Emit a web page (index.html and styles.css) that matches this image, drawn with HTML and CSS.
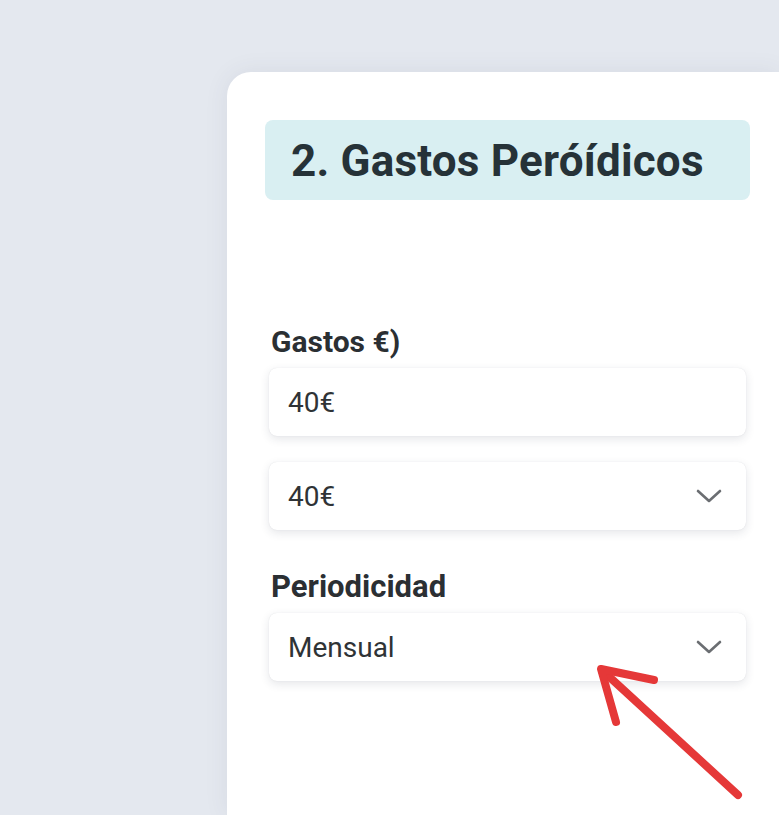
FILE: index.html
```html
<!DOCTYPE html>
<html lang="es">
<head>
<meta charset="utf-8">
<link rel="stylesheet" href="styles.css">
</head>
<body>
<div class="card">
  <div class="header"><h1 class="title">2. Gastos Peróídicos</h1></div>
  <div class="fields">
    <label class="label">Gastos €)</label>
    <div class="field"><span class="value">40€</span></div>
    <div class="field select"><span class="value">40€</span>
      <svg class="chev" width="26" height="16" viewBox="0 0 26 16"><path d="M2 3 L13 13 L24 3" fill="none" stroke="#6b6e72" stroke-width="2.6" stroke-linecap="round" stroke-linejoin="round"/></svg>
    </div>
    <label class="label label2">Periodicidad</label>
    <div class="field select"><span class="value">Mensual</span>
      <svg class="chev" width="26" height="16" viewBox="0 0 26 16"><path d="M2 3 L13 13 L24 3" fill="none" stroke="#6b6e72" stroke-width="2.6" stroke-linecap="round" stroke-linejoin="round"/></svg>
    </div>
  </div>
</div>
<svg class="arrow" width="779" height="815" viewBox="0 0 779 815">
  <g fill="none" stroke="#e53838" stroke-width="8" stroke-linecap="round" stroke-linejoin="round">
    <path d="M738 795 L604 672"/>
    <path d="M654 680 L601 669 L616 722"/>
  </g>
</svg>
</body>
</html>
```

FILE: styles.css
```css
html, body {
  margin: 0;
  padding: 0;
}
body {
  background: #e4e8ef;
  font-family: Roboto, "Liberation Sans", sans-serif;
  width: 779px;
  height: 815px;
  overflow: hidden;
  position: relative;
}
.card {
  margin: 72px 0 0 227px;
  height: 743px;
  box-sizing: border-box;
  background: #ffffff;
  border-radius: 24px 0 0 0;
  box-shadow: 0 0 24px rgba(60, 70, 90, 0.08);
  padding: 48px 29px 0 38px;
}
.header {
  width: 485px;
  height: 80px;
  background: #d9eff2;
  border-radius: 8px;
  display: flex;
  align-items: center;
  padding-left: 26px;
  box-sizing: border-box;
}
.title {
  margin: 0;
  font-size: 44px;
  font-weight: 700;
  color: #263238;
  line-height: 52px;
  padding-top: 2px;
  letter-spacing: 0.2px;
}
.fields {
  width: 477px;
  margin: 124px 0 0 4px;
  display: flex;
  flex-direction: column;
}
.label {
  font-size: 30px;
  font-weight: 700;
  color: #2b2f33;
  margin-left: 2px;
  height: 36px;
  line-height: 36px;
}
.label2 {
  margin-top: 39px;
  font-size: 31px;
}
.field {
  height: 68px;
  background: #ffffff;
  border-radius: 8px;
  box-shadow: 0 3px 10px rgba(40, 50, 70, 0.12), 0 0 1px rgba(40, 50, 70, 0.15);
  display: flex;
  align-items: center;
  justify-content: space-between;
  padding: 0 24px 0 19px;
  margin-top: 8px;
}
.field + .field {
  margin-top: 26px;
}
.value {
  font-size: 28px;
  color: #2f3336;
}
.arrow {
  position: absolute;
  left: 0;
  top: 0;
}
```
